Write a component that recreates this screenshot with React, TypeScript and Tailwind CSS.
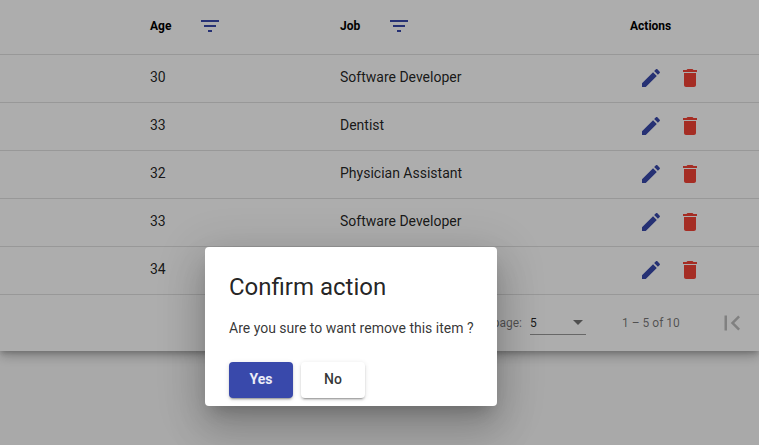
const rows = [
  { age: 30, job: "Software Developer" },
  { age: 33, job: "Dentist" },
  { age: 32, job: "Physician Assistant" },
  { age: 33, job: "Software Developer" },
  { age: 34, job: "" }, // hidden behind the dialog
];

function FilterIcon() {
  return (
    <svg viewBox="0 0 24 24" className="w-6 h-6 fill-[#3949ab]">
      <path d="M10 18h4v-2h-4v2zM3 6v2h18V6H3zm3 7h12v-2H6v2z" />
    </svg>
  );
}

function EditIcon() {
  return (
    <svg viewBox="0 0 24 24" className="w-6 h-6 fill-[#3949ab]">
      <path d="M3 17.25V21h3.75L17.81 9.94l-3.75-3.75L3 17.25zM20.71 7.04c.39-.39.39-1.02 0-1.41l-2.34-2.34c-.39-.39-1.02-.39-1.41 0l-1.83 1.83 3.75 3.75 1.83-1.83z" />
    </svg>
  );
}

function DeleteIcon() {
  return (
    <svg viewBox="0 0 24 24" className="w-6 h-6 fill-[#f44336]">
      <path d="M6 19c0 1.1.9 2 2 2h8c1.1 0 2-.9 2-2V7H6v12zM19 4h-3.5l-1-1h-5l-1 1H5v2h14V4z" />
    </svg>
  );
}

function FirstPageIcon() {
  return (
    <svg viewBox="0 0 24 24" className="w-[30px] h-[30px] fill-black/[0.26]">
      <path d="M18.41 16.59L13.82 12l4.59-4.59L17 6l-6 6 6 6zM6 6h2v12H6z" />
    </svg>
  );
}

function Row({ age, job }: { age: number; job: string }) {
  return (
    <div className="flex h-12 items-center border-b border-black/[0.12] pb-[2px] text-sm text-black/[0.87]">
      <div className="w-[190px] ml-[150px] pb-[2px]">{age}</div>
      <div className="w-[299px] pb-[2px]">{job}</div>
      <div className="flex gap-[15px]">
        <EditIcon />
        <DeleteIcon />
      </div>
    </div>
  );
}

export default function App() {
  return (
    <div className="relative h-[445px] w-[759px] overflow-hidden bg-[#fafafa] font-['Roboto',sans-serif]">
      <div className="bg-white shadow-[0_3px_5px_-1px_rgba(0,0,0,0.2),0_6px_10px_0_rgba(0,0,0,0.14),0_1px_18px_0_rgba(0,0,0,0.12)]">
        <div className="flex h-[55px] items-center border-b border-black/[0.12] pb-[2px] text-xs font-bold text-black">
          <div className="flex w-[190px] ml-[150px] items-center">
            <span className="w-12">Age</span>
            <FilterIcon />
          </div>
          <div className="flex w-[290px] items-center">
            <span className="w-[47px]">Job</span>
            <FilterIcon />
          </div>
          <span>Actions</span>
        </div>
        {rows.map((row, i) => (
          <Row key={i} age={row.age} job={row.job} />
        ))}
        <div className="flex h-14 items-center text-xs text-black/[0.54]">
          <span className="ml-[432px] w-[90px] text-right">Items per page:</span>
          <div className="ml-2 flex h-6 w-14 items-center justify-between border-b border-black/40 pr-[3px] text-black/[0.87]">
            <span>5</span>
            <span className="h-0 w-0 border-x-[5px] border-t-[5px] border-x-transparent border-t-black/[0.54]" />
          </div>
          <span className="ml-9 w-[95px]">1 – 5 of 10</span>
          <FirstPageIcon />
        </div>
      </div>

      <div className="absolute inset-0 bg-black/[0.32]" />

      <div className="absolute left-[205px] top-[247px] h-[159px] w-[292px] rounded bg-white px-6 pt-6 shadow-[0_11px_15px_-7px_rgba(0,0,0,0.2),0_24px_38px_3px_rgba(0,0,0,0.14),0_9px_46px_8px_rgba(0,0,0,0.12)]">
        <h2 className="text-2xl leading-8 font-normal text-black/[0.87]">Confirm action</h2>
        <p className="mt-[15px] whitespace-nowrap text-sm leading-5 text-black/[0.8]">Are you sure to want remove this item ?</p>
        <div className="mt-[24px] flex gap-2">
          <button className="h-9 w-16 rounded bg-[#3949ab] pb-[2px] text-sm font-bold text-white/90 shadow-[0_3px_1px_-2px_rgba(0,0,0,0.2),0_2px_2px_0_rgba(0,0,0,0.14),0_1px_5px_0_rgba(0,0,0,0.12)]">
            Yes
          </button>
          <button className="h-9 w-16 rounded bg-white pb-[2px] text-sm font-medium text-black/[0.8] shadow-[0_3px_1px_-2px_rgba(0,0,0,0.2),0_2px_2px_0_rgba(0,0,0,0.14),0_1px_5px_0_rgba(0,0,0,0.12)]">
            No
          </button>
        </div>
      </div>
    </div>
  );
}
